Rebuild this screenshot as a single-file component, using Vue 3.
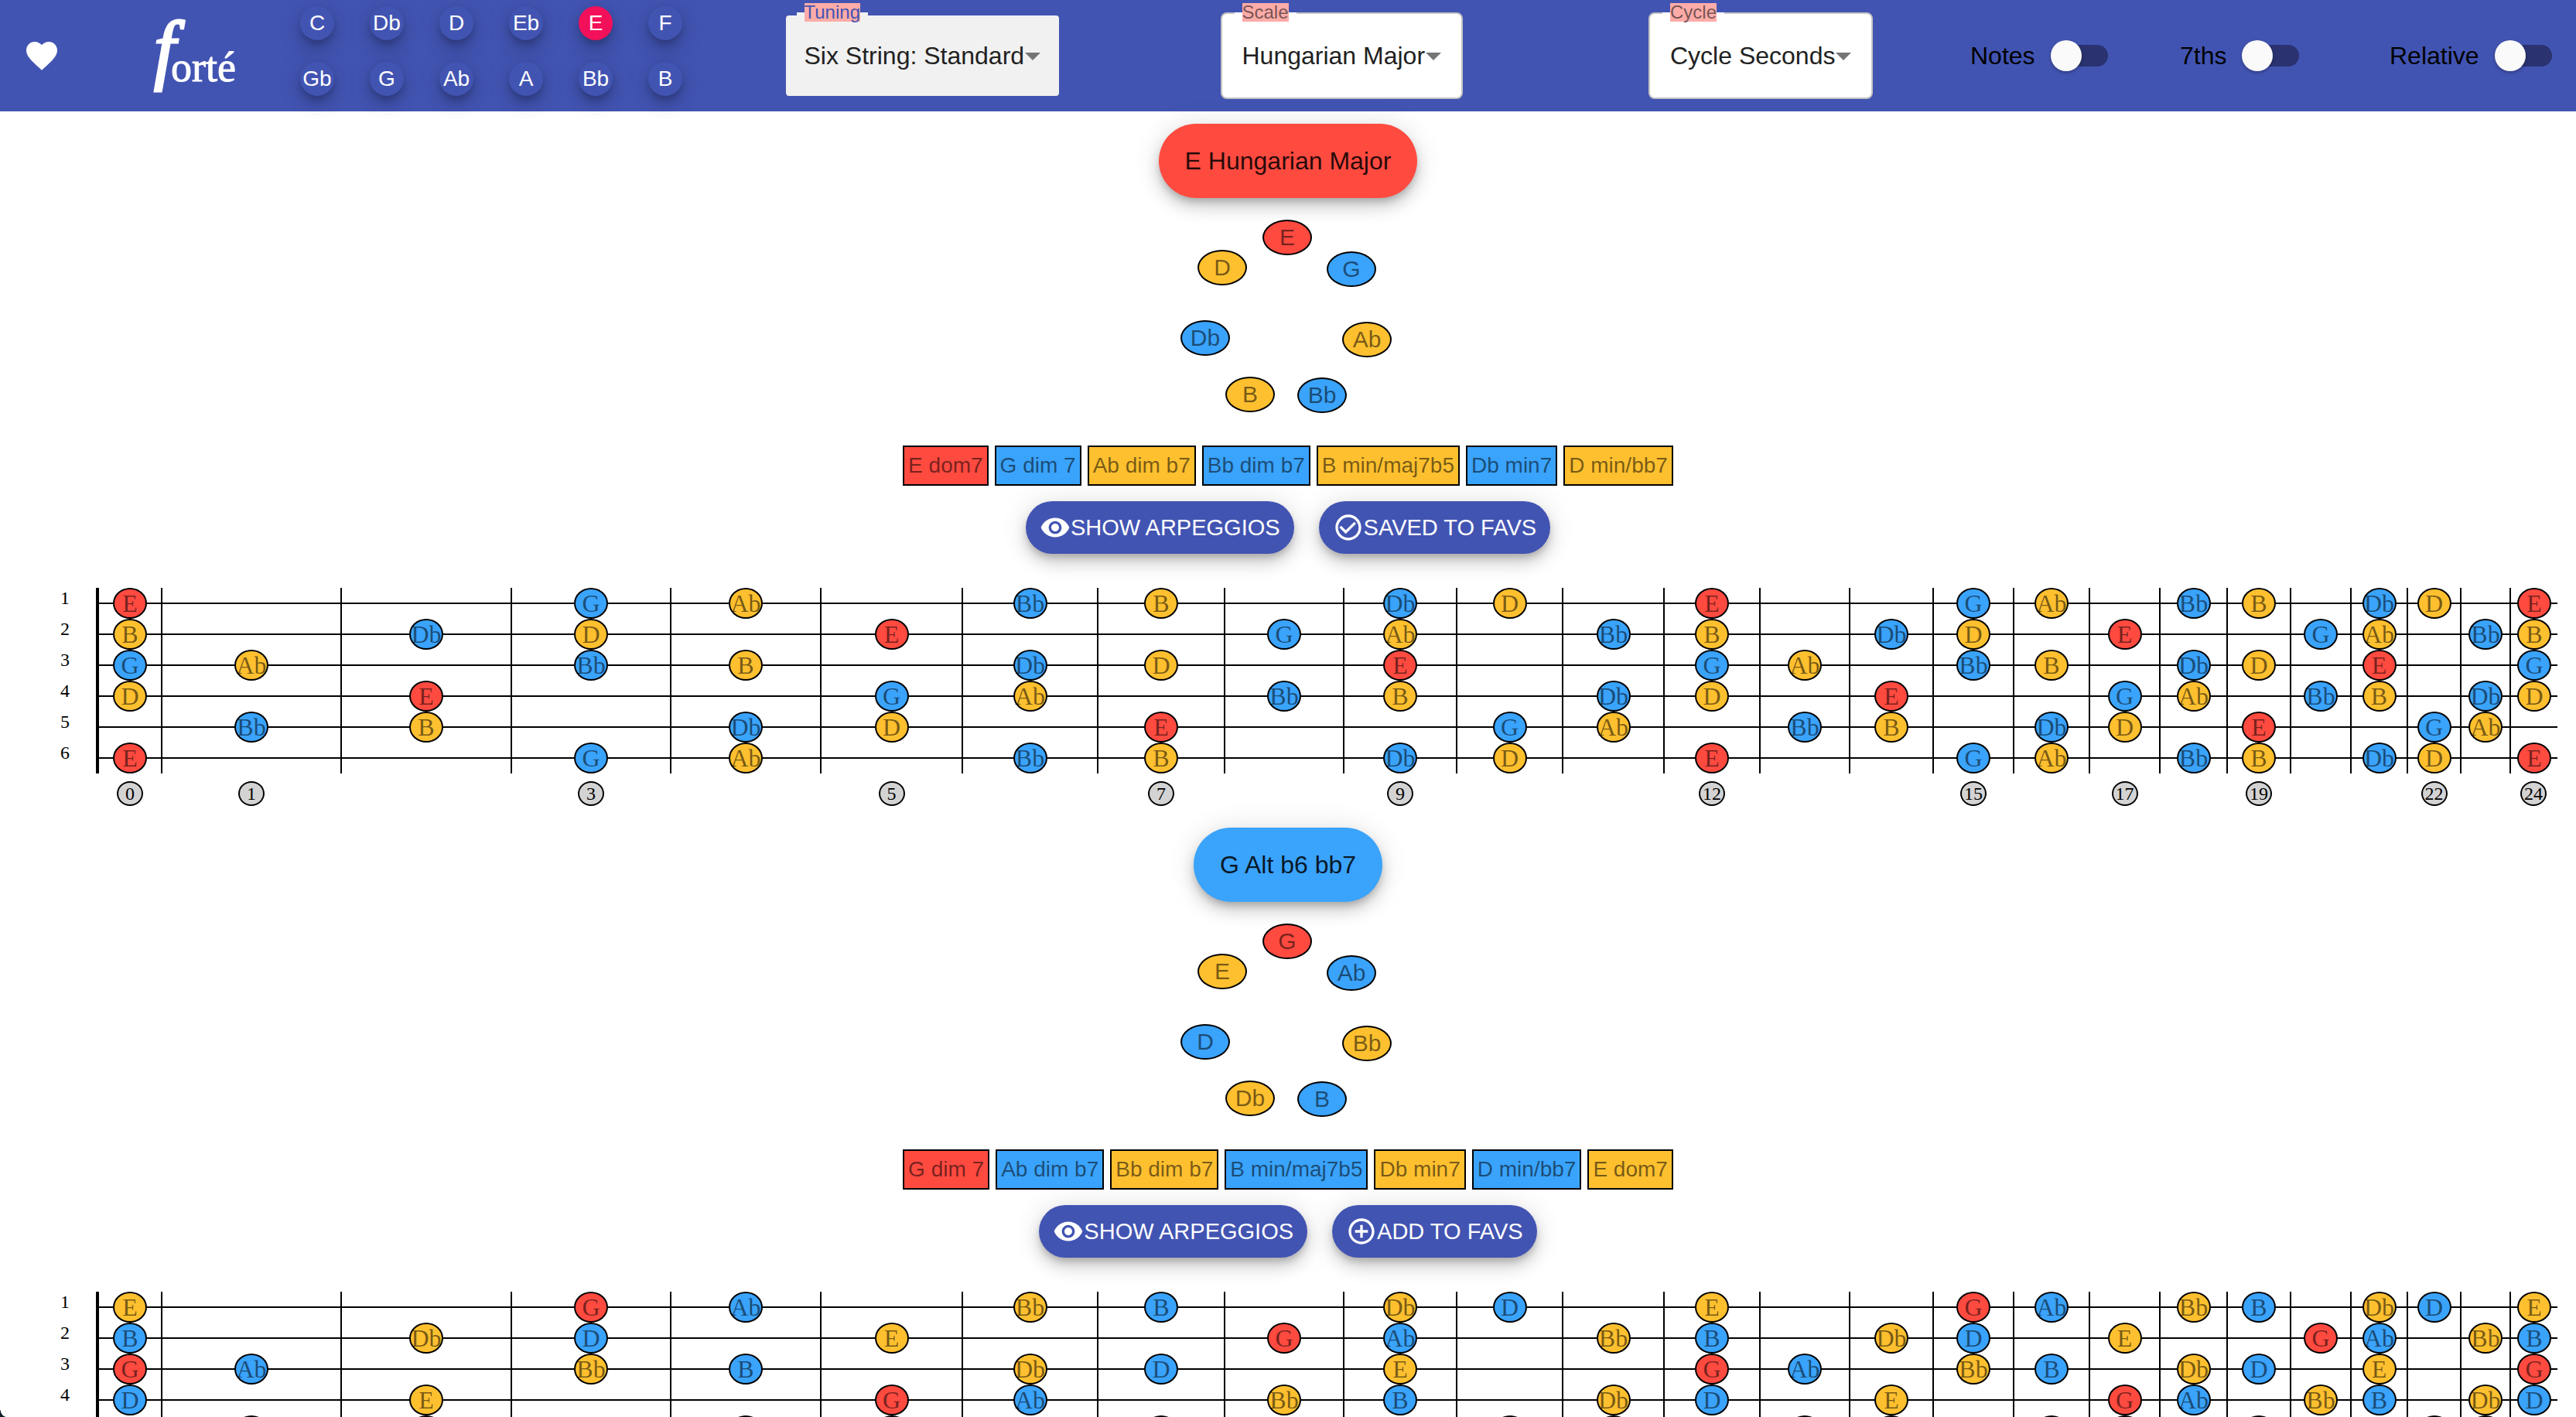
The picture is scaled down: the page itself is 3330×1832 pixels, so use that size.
<script setup>
import { ref } from 'vue'

const chromatic = ['C', 'Db', 'D', 'Eb', 'E', 'F', 'Gb', 'G', 'Ab', 'A', 'Bb', 'B']
const tuning = ['E', 'B', 'G', 'D', 'A', 'E']
const markers = [0, 1, 3, 5, 7, 9, 12, 15, 17, 19, 22, 24]
const frets = Array.from({ length: 25 }, (_, i) => i)

const activeKey = ref('E')

const fields = [
  { id: 'tuning', label: 'Tuning', value: 'Six String: Standard', focused: true },
  { id: 'scale', label: 'Scale', value: 'Hungarian Major', focused: false },
  { id: 'cycle', label: 'Cycle', value: 'Cycle Seconds', focused: false },
]
const toggles = ['Notes', '7ths', 'Relative']

const modes = [
  {
    title: 'E Hungarian Major',
    tone: 'red',
    saved: true,
    notes: ['E', 'G', 'Ab', 'Bb', 'B', 'Db', 'D'],
    chords: ['E dom7', 'G dim 7', 'Ab dim b7', 'Bb dim b7', 'B min/maj7b5', 'Db min7', 'D min/bb7'],
  },
  {
    title: 'G Alt b6 bb7',
    tone: 'blue',
    saved: false,
    notes: ['G', 'Ab', 'Bb', 'B', 'Db', 'D', 'E'],
    chords: ['G dim 7', 'Ab dim b7', 'Bb dim b7', 'B min/maj7b5', 'Db min7', 'D min/bb7', 'E dom7'],
  },
]

function toneAt(index) {
  if (index === 0) return 'red'
  return index % 2 ? 'blue' : 'yellow'
}

function noteAt(open, fret) {
  return chromatic[(chromatic.indexOf(open) + fret) % 12]
}

function toneOf(mode, open, fret) {
  const index = mode.notes.indexOf(noteAt(open, fret))
  return index < 0 ? null : toneAt(index)
}
</script>

<template>
  <div class="app">
    <header class="bar">
      <button class="icon-button" aria-label="Favourites">
        <svg viewBox="0 0 24 24" class="icon-large">
          <path d="M12 21.35l-1.45-1.32C5.4 15.36 2 12.28 2 8.5 2 5.42 4.42 3 7.5 3c1.74 0 3.41.81 4.5 2.09C13.09 3.81 14.76 3 16.5 3 19.58 3 22 5.42 22 8.5c0 3.78-3.4 6.86-8.55 11.54L12 21.35z" />
        </svg>
      </button>

      <a class="logo" href="#" aria-label="forté">
        <svg viewBox="0 0 130 144" width="130" height="144">
          <text class="logo-f" x="14" y="97">f</text>
          <text class="logo-rest" x="36" y="105">orté</text>
        </svg>
      </a>

      <div class="keys">
        <button
          v-for="key in chromatic"
          :key="key"
          class="key"
          :class="{ active: key === activeKey }"
          @click="activeKey = key"
        >{{ key }}</button>
      </div>

      <div v-for="field in fields" :key="field.id" class="field-cell">
        <div class="field" :class="{ focused: field.focused }">
          <select :id="field.id" class="field-select">
            <option>{{ field.value }}</option>
          </select>
          <label class="field-label" :for="field.id"><span>{{ field.label }}</span></label>
          <svg viewBox="0 0 24 24" class="field-arrow"><path d="M7 10l5 5 5-5z" /></svg>
        </div>
      </div>

      <label v-for="toggle in toggles" :key="toggle" class="toggle">
        {{ toggle }}
        <input type="checkbox" class="switch" />
      </label>
    </header>

    <main>
      <section v-for="mode in modes" :key="mode.title" class="mode">
        <button class="title" :class="mode.tone">{{ mode.title }}</button>

        <div class="ring">
          <span
            v-for="(note, i) in mode.notes"
            :key="note"
            class="ring-note"
            :class="[toneAt(i), 'spot-' + i]"
          >{{ note }}</span>
        </div>

        <div class="chords">
          <span v-for="(chord, i) in mode.chords" :key="chord" class="chord" :class="toneAt(i)">{{ chord }}</span>
        </div>

        <div class="actions">
          <button class="action">
            <svg viewBox="0 0 24 24" class="icon">
              <path d="M12 4.5C7 4.5 2.73 7.61 1 12c1.73 4.39 6 7.5 11 7.5s9.27-3.11 11-7.5c-1.73-4.39-6-7.5-11-7.5zM12 17c-2.76 0-5-2.24-5-5s2.24-5 5-5 5 2.24 5 5-2.24 5-5 5zm0-8c-1.66 0-3 1.34-3 3s1.34 3 3 3 3-1.34 3-3-1.34-3-3-3z" />
            </svg>
            SHOW ARPEGGIOS
          </button>
          <button class="action">
            <svg viewBox="0 0 24 24" class="icon">
              <path v-if="mode.saved" d="M16.59 7.58L10 14.17l-3.59-3.58L5 12l5 5 8-8zM12 2C6.48 2 2 6.48 2 12s4.48 10 10 10 10-4.48 10-10S17.52 2 12 2zm0 18c-4.42 0-8-3.58-8-8s3.58-8 8-8 8 3.58 8 8-3.58 8-8 8z" />
              <path v-else d="M13 7h-2v4H7v2h4v4h2v-4h4v-2h-4V7zm-1-5C6.48 2 2 6.48 2 12s4.48 10 10 10 10-4.48 10-10S17.52 2 12 2zm0 18c-4.41 0-8-3.59-8-8s3.59-8 8-8 8 3.59 8 8-3.59 8-8 8z" />
            </svg>
            {{ mode.saved ? 'SAVED TO FAVS' : 'ADD TO FAVS' }}
          </button>
        </div>

        <div class="fretboard">
          <div class="string-numbers">
            <span v-for="(open, s) in tuning" :key="s">{{ s + 1 }}</span>
          </div>
          <div class="neck">
            <div v-for="(open, s) in tuning" :key="s" class="string">
              <div v-for="fret in frets" :key="fret" class="fret">
                <span v-if="toneOf(mode, open, fret)" class="note" :class="toneOf(mode, open, fret)">{{ noteAt(open, fret) }}</span>
              </div>
            </div>
          </div>
          <div class="markers">
            <div v-for="fret in frets" :key="fret" class="marker-cell">
              <span v-if="markers.includes(fret)" class="marker">{{ fret }}</span>
            </div>
          </div>
        </div>
      </section>
    </main>
    <div class="corner"></div>
  </div>
</template>

<style>
body {
  margin: 0;
}
</style>

<style scoped>
.app {
  --indigo: #4254b2;
  --lift: 0 6px 10px -2px rgba(0, 0, 0, 0.2), 0 12px 20px 0 rgba(0, 0, 0, 0.14), 0 2px 36px 0 rgba(0, 0, 0, 0.12);
  position: relative;
  height: 100vh;
  overflow: hidden;
  background: #fff;
  font-family: "Liberation Sans", Arial, sans-serif;
}
button,
select {
  margin: 0;
  border: 0;
  padding: 0;
  font-family: inherit;
}
.red { background: #ff4a40; }
.blue { background: #3aa3fb; }
.yellow { background: #ffc02f; }

.bar {
  display: grid;
  grid-template-columns: 185fr 180fr 556fr repeat(3, 542fr) 271fr 271fr 241fr;
  align-items: center;
  height: 144px;
  background: var(--indigo);
}
.icon-button {
  display: flex;
  width: 48px;
  margin-left: 30px;
  background: none;
  fill: #fff;
}
.icon-large {
  width: 48px;
  height: 48px;
}
.logo {
  display: flex;
}
.logo svg {
  overflow: visible;
}
.logo text {
  font-family: "Liberation Serif", "Times New Roman", serif;
  fill: #fff;
  stroke: #fff;
}
.logo-f {
  font-size: 100px;
  font-style: italic;
  stroke-width: 3px;
}
.logo-rest {
  font-size: 54px;
  stroke-width: 1px;
}
.keys {
  display: grid;
  grid-template-columns: repeat(6, 90px);
  justify-items: center;
  align-self: start;
  row-gap: 28px;
  padding-top: 8px;
}
.key {
  width: 44px;
  height: 44px;
  border-radius: 50%;
  background: var(--indigo);
  box-shadow: var(--lift);
  color: #fff;
  font-size: 28px;
  line-height: 44px;
  white-space: nowrap;
}
.key.active {
  background: #f3105a;
}
.field-cell {
  display: flex;
  justify-content: center;
}
.field {
  --fill: #fff;
  position: relative;
}
.field.focused {
  --fill: #f1f1f1;
}
.field-select {
  appearance: none;
  box-sizing: border-box;
  display: block;
  height: 112px;
  padding: 0 46px 0 26px;
  border: 2px solid #c4c4c4;
  border-radius: 8px;
  background: var(--fill);
  color: #212121;
  font-size: 32px;
}
.focused .field-select {
  padding: 0 44px 0 24px;
  border: 4px solid var(--indigo);
}
.field-label {
  position: absolute;
  top: -12px;
  left: 28px;
  color: #755;
  font-size: 24px;
  line-height: 24px;
}
.field-label::before {
  content: "";
  position: absolute;
  top: 12px;
  left: -10px;
  right: -10px;
  height: 4px;
  background: var(--fill);
}
.field-label span {
  position: relative;
  display: block;
  background: #ffaca8;
}
.focused .field-label {
  color: var(--indigo);
}
.field-arrow {
  position: absolute;
  top: 32px;
  right: 14px;
  width: 48px;
  height: 48px;
  fill: #757575;
  pointer-events: none;
}
.toggle {
  display: flex;
  align-items: center;
  gap: 26px;
  color: #000;
  font-size: 32px;
  white-space: nowrap;
}
.switch {
  appearance: none;
  position: relative;
  width: 68px;
  height: 28px;
  margin: 0;
  border-radius: 14px;
  background: #2a3370;
}
.switch::before {
  content: "";
  position: absolute;
  top: -6px;
  left: -6px;
  width: 40px;
  height: 40px;
  border-radius: 50%;
  background: #fafafa;
  box-shadow: 0 2px 4px rgba(0, 0, 0, 0.3);
}

.mode {
  display: flex;
  flex-direction: column;
  align-items: center;
  height: 894px;
  padding-top: 16px;
}
.title {
  flex: none;
  height: 96px;
  padding: 0 34px;
  border-radius: 48px;
  box-shadow: var(--lift);
  color: rgba(0, 0, 0, 0.87);
  font-size: 32px;
}
.ring {
  position: relative;
  flex: none;
  width: 278px;
  height: 320px;
}
.ring-note {
  position: absolute;
  box-sizing: border-box;
  width: 64px;
  height: 46px;
  border: 2px solid #000;
  border-radius: 50%;
  color: rgba(0, 0, 0, 0.54);
  font-size: 30px;
  line-height: 42px;
  text-align: center;
}
.spot-0 { left: 106px; top: 28px; }
.spot-1 { left: 189px; top: 69px; }
.spot-2 { left: 209px; top: 160px; }
.spot-3 { left: 151px; top: 232px; }
.spot-4 { left: 58px; top: 231px; }
.spot-5 { left: 0; top: 158px; }
.spot-6 { left: 22px; top: 67px; }
.chords {
  display: flex;
  gap: 8px;
}
.chord {
  padding: 0 5px;
  border: 2px solid #000;
  color: rgba(0, 0, 0, 0.54);
  font-size: 28px;
  line-height: 48px;
  white-space: nowrap;
}
.actions {
  display: flex;
  gap: 32px;
  margin-top: 20px;
}
.action {
  display: flex;
  align-items: center;
  height: 68px;
  padding: 0 18px;
  border-radius: 34px;
  background: var(--indigo);
  box-shadow: var(--lift);
  color: #fff;
  font-size: 29px;
  white-space: nowrap;
}
.icon {
  width: 40px;
  height: 40px;
  fill: currentColor;
}

.fretboard {
  box-sizing: border-box;
  display: grid;
  grid-template-columns: 40px minmax(0, 1fr);
  column-gap: 20px;
  width: 100%;
  margin-top: 44px;
  padding: 0 24px 0 64px;
  font-family: "Liberation Serif", "Times New Roman", serif;
}
.string-numbers {
  display: grid;
  grid-auto-rows: 40px;
  justify-items: center;
  font-size: 24px;
  line-height: 26px;
}
.neck {
  border-left: 4px solid #000;
}
.string,
.markers {
  display: grid;
  grid-template-columns:
    82fr 232fr 220fr 206fr 194fr 183fr 175fr 164fr 154fr 146fr 137fr 131fr 124fr
    116fr 108fr 104fr 98fr 91fr 87fr 82fr 78fr 73fr 69fr 64fr 60fr;
}
.string {
  height: 40px;
  background: linear-gradient(#000, #000) center / 100% 2px no-repeat;
}
.fret {
  display: flex;
  justify-content: center;
  min-width: 0;
  border-right: 2px solid #000;
}
.fret:last-child {
  border-right: 0;
}
.note {
  box-sizing: border-box;
  flex: none;
  width: 44px;
  height: 40px;
  border: 2px solid #000;
  border-radius: 50%;
  color: rgba(0, 0, 0, 0.54);
  font-size: 32px;
  line-height: 36px;
  display: flex;
  justify-content: center;
}
.markers {
  grid-column: 2;
  margin-top: 10px;
  padding-left: 4px;
}
.marker-cell {
  display: flex;
  justify-content: center;
  min-width: 0;
  padding-right: 2px;
}
.marker {
  box-sizing: border-box;
  flex: none;
  width: 34px;
  height: 32px;
  border: 2px solid #000;
  border-radius: 50%;
  background: #d3d3d3;
  font-size: 24px;
  line-height: 28px;
  text-align: center;
}
.corner {
  position: absolute;
  left: 0;
  bottom: 0;
  width: 8px;
  height: 12px;
  background: radial-gradient(ellipse 8px 12px at 100% 0, transparent 96%, #14202a 100%);
}
</style>
